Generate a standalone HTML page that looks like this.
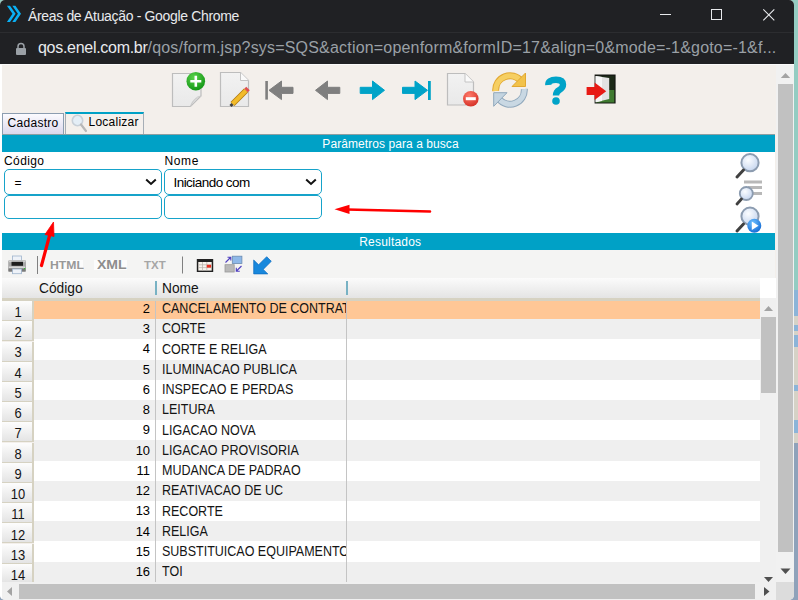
<!DOCTYPE html>
<html><head><meta charset="utf-8">
<style>
*{box-sizing:border-box;margin:0;padding:0}
html,body{width:798px;height:600px;overflow:hidden;font-family:"Liberation Sans",sans-serif;background:#8fb9b9}
.a{position:absolute}
.win{left:0;top:0;width:794px;height:600px;background:#f3efeb;border-radius:5px;overflow:hidden}
.ttl{color:#e8eaed;font-size:14px;letter-spacing:-0.34px;left:28px;top:7.5px;white-space:nowrap}
.url{left:38px;top:38.5px;font-size:16px;color:#9aa0a6;white-space:nowrap;letter-spacing:0.19px}
.url b{font-weight:normal;color:#e8eaed;letter-spacing:-0.29px}
.bar{background:#00a1c6;color:#fff;font-size:12px;text-align:center;height:18px;line-height:18px}
.lbl{font-size:12px;color:#000;white-space:nowrap}
.fld{border:1.4px solid #16a3ca;border-radius:5px;background:#fff}
.dt{font-size:14.5px;white-space:nowrap;line-height:16px;color:#141414}
.nm{transform:scaleX(0.862);transform-origin:0 0;width:213.5px;overflow:hidden}
.num{left:2px;width:32px;font-size:14.4px;line-height:16px;text-align:center;background:linear-gradient(#fdfdfd,#e4e4e4);border-bottom:1.3px solid #d6d2c2;border-right:2px solid #d6d2c2}
.cod{position:absolute;left:0;width:116px;text-align:right;top:2px}
.nom{position:absolute;left:128px;width:184px;overflow:hidden;top:2px}
.vl{position:absolute;top:0;width:1px;height:20px;background:#bdbdbd}
</style></head><body>
<div class="a" style="left:0;top:0;width:798px;height:290px;background:#94ccc2"></div>
<div class="a" style="left:0;top:290px;width:798px;height:310px;background:#8fa2ba"></div>
<div class="a" style="left:0;top:316px;width:798px;height:9px;background:#d6d2c6"></div>
<div class="a" style="left:0;top:331px;width:798px;height:4px;background:#d6d2c6"></div>
<div class="a" style="left:0;top:347px;width:798px;height:38px;background:#d6d2c6"></div>
<div class="a" style="left:0;top:391px;width:798px;height:29px;background:#d6d2c6"></div>
<div class="a" style="left:0;top:433px;width:798px;height:10px;background:#d6d2c6"></div>
<div class="a" style="left:0;top:290px;width:798px;height:26px;background:#8cb4d8"></div>
<div class="a" style="left:0;top:325px;width:798px;height:6px;background:#8cb4d8"></div>
<div class="a" style="left:0;top:335px;width:798px;height:12px;background:#8cb4d8"></div>
<div class="a" style="left:0;top:385px;width:798px;height:6px;background:#8cb4d8"></div>
<div class="a" style="left:0;top:420px;width:798px;height:13px;background:#8cb4d8"></div>
<div class="a win">
<div class="a" style="left:0;top:0;width:794px;height:32px;background:#202124"></div>
<div class="a" style="left:0;top:32px;width:794px;height:32px;background:#202124;border-top:1px solid #2c2d30"></div>
<div class="a" style="left:0;top:64px;width:794px;height:1px;background:#fafafa"></div>
<!-- chrome icon -->
<svg class="a" style="left:0;top:0" width="26" height="26" viewBox="0 0 26 26"><path d="M6.9 5.8 H10 L15.6 13.8 L10 21.9 H6.9 L12.5 13.8 Z M12.3 5.8 H15.4 L21 13.8 L15.4 21.9 H12.3 L17.9 13.8 Z" fill="#0ab0f4"/></svg>
<div class="a ttl">Áreas de Atuação - Google Chrome</div>
<!-- window controls -->
<div class="a" style="left:660px;top:14px;width:11px;height:1px;background:#e8eaed"></div>
<div class="a" style="left:711px;top:9px;width:11px;height:11px;border:1px solid #e8eaed"></div>
<svg class="a" style="left:762px;top:8px" width="14" height="14" viewBox="0 0 14 14"><path d="M1.3 1.3 L12.3 12.3 M12.3 1.3 L1.3 12.3" stroke="#e8eaed" stroke-width="1.1"/></svg>
<!-- lock -->
<svg class="a" style="left:15px;top:42px" width="12" height="14" viewBox="0 0 12 14"><path d="M3 6 V4.5 A3 3 0 0 1 9 4.5 V6" stroke="#9aa0a6" stroke-width="1.5" fill="none"/><rect x="1" y="6" width="10" height="7" rx="1" fill="#9aa0a6"/></svg>
<div class="a url"><b>qos.enel.com.br</b>/qos/form.jsp?sys=SQS&amp;action=openform&amp;formID=17&amp;align=0&amp;mode=-1&amp;goto=-1&amp;f...</div>

<!-- content left white strip -->
<div class="a" style="left:0;top:65px;width:2px;height:535px;background:#fff"></div>

<!-- tabs -->
<div class="a" style="left:2px;top:113px;width:62px;height:21px;border:1px solid #8c9db0;border-bottom:none;background:linear-gradient(#fbfbff,#dcd8ec);"></div>
<div class="a lbl" style="left:7.5px;top:115.5px;letter-spacing:0.3px">Cadastro</div>
<div class="a" style="left:65px;top:112px;width:79px;height:22px;border:1px solid #a6aeb6;border-top:2px solid #00a1c6;border-bottom:none;background:#f4f0ec"></div>
<svg class="a" style="left:70px;top:113px" width="18" height="20" viewBox="0 0 18 20"><circle cx="7.5" cy="7.5" r="5.2" fill="#e4eef6" stroke="#c8d0d8" stroke-width="1.6"/><path d="M11 11.5 L16 18" stroke="#b8b8b8" stroke-width="2.2" stroke-linecap="round"/></svg>
<div class="a lbl" style="left:88.5px;top:114.5px;letter-spacing:0.25px">Localizar</div>

<div class="a bar" style="left:2px;top:134px;width:773px;padding-left:4px;line-height:19px;border-top:1px solid #8c9ea2;letter-spacing:0.07px">Parâmetros para a busca</div>
<div class="a" style="left:2px;top:152px;width:773px;height:81px;background:#fff"></div>
<div class="a lbl" style="left:4px;top:154px;letter-spacing:0.4px">Código</div>
<div class="a lbl" style="left:164.5px;top:154px;letter-spacing:0.6px">Nome</div>
<div class="a fld" style="left:4px;top:169px;width:158px;height:26px"></div>
<div class="a fld" style="left:164px;top:169px;width:158px;height:26px"></div>
<div class="a fld" style="left:4px;top:195px;width:158px;height:24px"></div>
<div class="a fld" style="left:164px;top:195px;width:158px;height:24px"></div>
<div class="a" style="left:14.5px;top:176px;font-size:12px">=</div>
<div class="a" style="left:173.5px;top:174.5px;font-size:13.5px;letter-spacing:-0.55px">Iniciando com</div>
<svg class="a" style="left:145px;top:178px" width="12" height="8" viewBox="0 0 12 8"><path d="M1.2 1.5 L6 6 L10.8 1.5" stroke="#111" stroke-width="2" fill="none"/></svg>
<svg class="a" style="left:305px;top:178px" width="12" height="8" viewBox="0 0 12 8"><path d="M1.2 1.5 L6 6 L10.8 1.5" stroke="#111" stroke-width="2" fill="none"/></svg>

<!-- search icons -->
<svg class="a" style="left:733px;top:152px" width="32" height="82" viewBox="0 0 32 82">
<defs><radialGradient id="lens" cx="0.4" cy="0.35" r="0.7"><stop offset="0" stop-color="#fbfdff"/><stop offset="1" stop-color="#c4d4ee"/></radialGradient>
<radialGradient id="play" cx="0.4" cy="0.3" r="0.8"><stop offset="0" stop-color="#6ec0ff"/><stop offset="1" stop-color="#0a62d0"/></radialGradient></defs>
<circle cx="17" cy="10.7" r="8.6" fill="url(#lens)" stroke="#8c9cb0" stroke-width="2"/>
<path d="M4 25 L10.5 18" stroke="#404040" stroke-width="3" stroke-linecap="round"/>
<rect x="11" y="28.5" width="18" height="3" fill="#b8b8b8"/><rect x="15" y="34" width="14" height="3" fill="#b8b8b8"/><rect x="17" y="40" width="12" height="3" fill="#b8b8b8"/>
<circle cx="13.3" cy="41.5" r="6.5" fill="url(#lens)" stroke="#8c9cb0" stroke-width="1.8"/>
<path d="M4 52 L8.5 47" stroke="#404040" stroke-width="2.8" stroke-linecap="round"/>
<circle cx="17" cy="64.2" r="8.6" fill="url(#lens)" stroke="#8c9cb0" stroke-width="2"/>
<path d="M4 79 L10.5 72" stroke="#404040" stroke-width="3" stroke-linecap="round"/>
<circle cx="21.3" cy="73.7" r="7" fill="url(#play)"/>
<path d="M18.8 69.5 L25.5 73.7 L18.8 77.9 Z" fill="#fff"/>
</svg>



<div class="a bar" style="left:2px;top:233px;width:773px;height:17px;line-height:19px;padding-left:3.5px;letter-spacing:0.2px">Resultados</div>
<!-- main toolbar icons -->
<svg class="a" style="left:160px;top:66px" width="470" height="46" viewBox="160 66 470 46">
<defs>
<linearGradient id="pg" x1="0" y1="0" x2="0" y2="1"><stop offset="0" stop-color="#f2f2f2"/><stop offset="1" stop-color="#e9e9e9"/></linearGradient>
<radialGradient id="gr" cx="0.4" cy="0.3" r="0.8"><stop offset="0" stop-color="#5ad24a"/><stop offset="1" stop-color="#0b8f10"/></radialGradient>
<radialGradient id="rd" cx="0.4" cy="0.3" r="0.8"><stop offset="0" stop-color="#ff7a6a"/><stop offset="1" stop-color="#d02a20"/></radialGradient>
<linearGradient id="yl" x1="0" y1="0" x2="1" y2="1"><stop offset="0" stop-color="#f6d98a"/><stop offset="1" stop-color="#e8b030"/></linearGradient>
<linearGradient id="bl" x1="0" y1="0" x2="1" y2="1"><stop offset="0" stop-color="#d8e2ea"/><stop offset="1" stop-color="#9eb4c6"/></linearGradient>
</defs>
<!-- new -->
<path d="M172.5 73.5 H201 V96 L190.5 106.5 H172.5 Z" fill="url(#pg)" stroke="#bdbdbd" stroke-width="1.2"/>
<path d="M201 96 Q194 96.5 190.5 106.5 Q192 100 201 96 Z" fill="#fff" stroke="#c8c8c8" stroke-width="0.8"/>
<circle cx="195.8" cy="81.2" r="9.3" fill="url(#gr)"/>
<path d="M190.3 81.2 H201.3 M195.8 75.7 V86.7" stroke="#fff" stroke-width="2.6"/>
<!-- edit -->
<path d="M220.5 72.5 H240.5 L248.5 80.5 V106.5 H220.5 Z" fill="url(#pg)" stroke="#bdbdbd" stroke-width="1.2"/>
<path d="M240.5 72.5 V80.5 H248.5" fill="#fafafa" stroke="#c4c4c4" stroke-width="1"/>
<path d="M232.5 104 L246 90.5" stroke="#b07a10" stroke-width="5.6" stroke-linecap="butt"/>
<path d="M232.5 104 L246 90.5" stroke="#f2bb2a" stroke-width="4" stroke-linecap="butt"/>
<path d="M246 90.5 L248 88.5" stroke="#e05050" stroke-width="5" />
<path d="M232.5 104 L230.5 106" stroke="#404040" stroke-width="3"/>
<!-- first -->
<rect x="265.3" y="81" width="2.6" height="18.6" fill="#7f7f7f"/>
<path d="M269 90.3 L281.5 81 V87.3 H293 V93.4 H281.5 V99.6 Z" fill="#7f7f7f" stroke="#7f7f7f" stroke-width="1" stroke-linejoin="round"/>
<!-- prev -->
<path d="M315.5 90.3 L327.5 81 V87.3 H339.8 V93.4 H327.5 V99.6 Z" fill="#7f7f7f" stroke="#7f7f7f" stroke-width="1" stroke-linejoin="round"/>
<!-- next -->
<path d="M384.5 90.3 L372.5 81 V87.3 H360.2 V93.4 H372.5 V99.6 Z" fill="#00a3c8" stroke="#00a3c8" stroke-width="1" stroke-linejoin="round"/>
<!-- last -->
<path d="M427.5 90.3 L415 81 V87.3 H402.5 V93.4 H415 V99.6 Z" fill="#00a3c8" stroke="#00a3c8" stroke-width="1" stroke-linejoin="round"/>
<rect x="428" y="81" width="2.8" height="19" fill="#00a3c8"/>
<!-- delete -->
<path d="M447.5 73.5 H465 L473.5 82 V105 H447.5 Z" fill="url(#pg)" stroke="#bdbdbd" stroke-width="1.2"/>
<path d="M465 73.5 V82 H473.5" fill="#fafafa" stroke="#c4c4c4" stroke-width="1"/>
<circle cx="470.8" cy="98.7" r="7.8" fill="url(#rd)"/>
<rect x="465.8" y="97.2" width="10" height="3" fill="#fff"/>
<!-- refresh -->
<path d="M495.7 91 A14.3 14.3 0 0 1 521 81" stroke="#e2a832" stroke-width="7" fill="none"/>
<path d="M495.7 91 A14.3 14.3 0 0 1 521 81" stroke="#f6cf62" stroke-width="5" fill="none"/>
<path d="M525.5 73 V86.5 H512 Z" fill="#f2c24a" stroke="#e2a832" stroke-width="1" stroke-linejoin="round"/>
<path d="M524.3 89 A14.3 14.3 0 0 1 499 99" stroke="#90a8bc" stroke-width="7" fill="none"/>
<path d="M524.3 89 A14.3 14.3 0 0 1 499 99" stroke="#c9d8e3" stroke-width="5" fill="none"/>
<path d="M493.7 106.3 V92.7 H507 Z" fill="#c4d4e0" stroke="#90a8bc" stroke-width="1" stroke-linejoin="round"/>
<!-- help -->
<path d="M548.3 85 Q548 79.7 556 79.7 Q563 79.7 563 84.5 Q563 88 559.5 89.8 Q556 91.6 556 95.6" stroke="#00a3c8" stroke-width="6.4" fill="none" stroke-linecap="butt"/>
<circle cx="556" cy="101" r="3.8" fill="#00a3c8"/>
<!-- exit -->
<rect x="594.6" y="74.5" width="21" height="29" fill="#161a14"/>
<rect x="596" y="90" width="18.3" height="12.5" fill="#3f7a30"/>
<rect x="596" y="76" width="18.3" height="14" fill="#1c2a18"/>
<path d="M595.6 76 L609.2 78 V99 L595.6 102.3 Z" fill="#e2e2e2"/>
<path d="M595.6 76 L602 77 V101 L595.6 102.3 Z" fill="#f6f6f6"/>
<path d="M586.6 87 H594.6 V82.5 L606.2 91.2 L594.6 100 V95 H586.6 Z" fill="#e81a14"/>
</svg>

<!-- grid toolbar -->
<div class="a" style="left:2px;top:250px;width:773px;height:28px;background:#f4f4f3"></div>
<svg class="a" style="left:0;top:250px" width="290" height="28" viewBox="0 250 290 28">
<rect x="12.5" y="256" width="9" height="5" fill="#eef2f8" stroke="#9fb4cc" stroke-width="0.8"/>
<rect x="8.2" y="260.2" width="17.8" height="11.5" rx="1" fill="#a8a8a8"/>
<rect x="8.8" y="260.6" width="16.6" height="1.6" fill="#d0d0d0"/>
<rect x="11.5" y="261.8" width="11.5" height="4" fill="#1e1e1e"/>
<rect x="9" y="266.5" width="16" height="1.6" fill="#d8d8d8"/>
<rect x="8.5" y="268.5" width="17" height="3" fill="#7a7a7a"/>
<rect x="24" y="268" width="1.2" height="1.2" fill="#30c030"/>
<rect x="12.5" y="269" width="9" height="4.7" fill="#eef2f8" stroke="#9fb4cc" stroke-width="0.8"/>
<rect x="37" y="256" width="1" height="18" fill="#808080"/>
<rect x="50" y="260" width="33" height="10" fill="#fcfcfc"/>
<rect x="94" y="260" width="33" height="10" fill="#fcfcfc"/>
<rect x="182" y="256.5" width="1" height="17" fill="#808080"/>
<!-- table -->
<rect x="196.8" y="259" width="16.4" height="13" fill="#222"/>
<rect x="198.3" y="262" width="13.4" height="8.6" fill="#f8f4ee"/>
<path d="M198.3 264.8 H211.7 M198.3 267.6 H211.7 M202.5 262 V270.6 M206.8 262 V270.6" stroke="#b8b0a8" stroke-width="0.7"/>
<rect x="206.8" y="264.8" width="4.3" height="2.8" fill="#e83020"/>
<!-- swap -->
<rect x="232.3" y="256.2" width="9.6" height="7.3" fill="#8eb8e8" stroke="#6a8ab0" stroke-width="0.8"/>
<rect x="225" y="264.7" width="9.2" height="7.3" fill="#b8b8b8" stroke="#9a9a9a" stroke-width="0.8"/>
<path d="M225.5 262.5 L230.5 257.5 M227.5 257.3 H230.8 V260.6" stroke="#5040c0" stroke-width="1.1" fill="none"/>
<path d="M241.5 266 L236.5 271 M236.3 267.8 V271.2 H239.8" stroke="#5040c0" stroke-width="1.1" fill="none"/>
<!-- blue arrow -->
<path d="M253.7 273.9 V260 L258.6 264.8 L266.7 256.7 L271.3 261.3 L263.2 269.4 L267.8 273.9 Z" fill="#1888dc" stroke="#0d6cc0" stroke-width="0.7" stroke-linejoin="round"/>
</svg>
<div class="a" style="left:49.5px;top:258.5px;font-size:11.5px;font-weight:bold;color:#999;transform:scaleX(1.06);transform-origin:0 0">HTML</div>
<div class="a" style="left:96.5px;top:258px;font-size:12px;font-weight:bold;color:#8e8e8e;transform:scaleX(1.17);transform-origin:0 0">XML</div>
<div class="a" style="left:144px;top:258.5px;font-size:11.5px;font-weight:bold;color:#a6a6a6;letter-spacing:0px">TXT</div>

<!-- grid header -->
<div class="a" style="left:2px;top:278px;width:758px;height:20px;background:linear-gradient(#fbfbfb,#e4e4e4)"></div>
<div class="a" style="left:2px;top:298px;width:758px;height:2.7px;background:#d6d2c2"></div>
<div class="a" style="left:760px;top:278px;width:16px;height:20px;background:#fff"></div>
<div class="a" style="left:39px;top:279.8px;font-size:14.2px;white-space:nowrap;color:#141414;transform:scaleX(0.97);transform-origin:0 0">Código</div>
<div class="a" style="left:155px;top:281px;width:2.2px;height:13.5px;background:#78b2c4"></div>
<div class="a" style="left:162px;top:279.8px;font-size:14.2px;white-space:nowrap;color:#141414;transform:scaleX(0.97);transform-origin:0 0">Nome</div>
<div class="a" style="left:346px;top:281px;width:2.2px;height:13.5px;background:#78b2c4"></div>
<div class="a" style="left:34px;top:300.70px;width:726px;height:17.90px;background:#ffc796"></div>
<div class="a dtNone" style="left:34px;top:300.00px;width:116px;text-align:right;font-size:13.6px;margin-top:0.8px;transform:scaleX(0.95);transform-origin:100% 0">2</div>
<div class="a dt nm" style="left:162px;top:300.00px">CANCELAMENTO DE CONTRATO</div>
<div class="a" style="left:34px;top:319.20px;width:726px;height:20.20px;background:#efefef"></div>
<div class="a dtNone" style="left:34px;top:320.25px;width:116px;text-align:right;font-size:13.6px;margin-top:0.8px;transform:scaleX(0.95);transform-origin:100% 0">3</div>
<div class="a dt nm" style="left:162px;top:320.25px">CORTE</div>
<div class="a" style="left:34px;top:339.40px;width:726px;height:20.20px;background:#ffffff"></div>
<div class="a dtNone" style="left:34px;top:340.50px;width:116px;text-align:right;font-size:13.6px;margin-top:0.8px;transform:scaleX(0.95);transform-origin:100% 0">4</div>
<div class="a dt nm" style="left:162px;top:340.50px">CORTE E RELIGA</div>
<div class="a" style="left:34px;top:359.60px;width:726px;height:20.20px;background:#efefef"></div>
<div class="a dtNone" style="left:34px;top:360.75px;width:116px;text-align:right;font-size:13.6px;margin-top:0.8px;transform:scaleX(0.95);transform-origin:100% 0">5</div>
<div class="a dt nm" style="left:162px;top:360.75px">ILUMINACAO PUBLICA</div>
<div class="a" style="left:34px;top:379.80px;width:726px;height:20.20px;background:#ffffff"></div>
<div class="a dtNone" style="left:34px;top:381.00px;width:116px;text-align:right;font-size:13.6px;margin-top:0.8px;transform:scaleX(0.95);transform-origin:100% 0">6</div>
<div class="a dt nm" style="left:162px;top:381.00px">INSPECAO E PERDAS</div>
<div class="a" style="left:34px;top:400.00px;width:726px;height:20.20px;background:#efefef"></div>
<div class="a dtNone" style="left:34px;top:401.25px;width:116px;text-align:right;font-size:13.6px;margin-top:0.8px;transform:scaleX(0.95);transform-origin:100% 0">8</div>
<div class="a dt nm" style="left:162px;top:401.25px">LEITURA</div>
<div class="a" style="left:34px;top:420.20px;width:726px;height:20.20px;background:#ffffff"></div>
<div class="a dtNone" style="left:34px;top:421.50px;width:116px;text-align:right;font-size:13.6px;margin-top:0.8px;transform:scaleX(0.95);transform-origin:100% 0">9</div>
<div class="a dt nm" style="left:162px;top:421.50px">LIGACAO NOVA</div>
<div class="a" style="left:34px;top:440.40px;width:726px;height:20.20px;background:#efefef"></div>
<div class="a dtNone" style="left:34px;top:441.75px;width:116px;text-align:right;font-size:13.6px;margin-top:0.8px;transform:scaleX(0.95);transform-origin:100% 0">10</div>
<div class="a dt nm" style="left:162px;top:441.75px">LIGACAO PROVISORIA</div>
<div class="a" style="left:34px;top:460.60px;width:726px;height:20.20px;background:#ffffff"></div>
<div class="a dtNone" style="left:34px;top:462.00px;width:116px;text-align:right;font-size:13.6px;margin-top:0.8px;transform:scaleX(0.95);transform-origin:100% 0">11</div>
<div class="a dt nm" style="left:162px;top:462.00px">MUDANCA DE PADRAO</div>
<div class="a" style="left:34px;top:480.80px;width:726px;height:20.20px;background:#efefef"></div>
<div class="a dtNone" style="left:34px;top:482.25px;width:116px;text-align:right;font-size:13.6px;margin-top:0.8px;transform:scaleX(0.95);transform-origin:100% 0">12</div>
<div class="a dt nm" style="left:162px;top:482.25px">REATIVACAO DE UC</div>
<div class="a" style="left:34px;top:501.00px;width:726px;height:20.20px;background:#ffffff"></div>
<div class="a dtNone" style="left:34px;top:502.50px;width:116px;text-align:right;font-size:13.6px;margin-top:0.8px;transform:scaleX(0.95);transform-origin:100% 0">13</div>
<div class="a dt nm" style="left:162px;top:502.50px">RECORTE</div>
<div class="a" style="left:34px;top:521.20px;width:726px;height:20.20px;background:#efefef"></div>
<div class="a dtNone" style="left:34px;top:522.75px;width:116px;text-align:right;font-size:13.6px;margin-top:0.8px;transform:scaleX(0.95);transform-origin:100% 0">14</div>
<div class="a dt nm" style="left:162px;top:522.75px">RELIGA</div>
<div class="a" style="left:34px;top:541.40px;width:726px;height:20.20px;background:#ffffff"></div>
<div class="a dtNone" style="left:34px;top:543.00px;width:116px;text-align:right;font-size:13.6px;margin-top:0.8px;transform:scaleX(0.95);transform-origin:100% 0">15</div>
<div class="a dt nm" style="left:162px;top:543.00px">SUBSTITUICAO EQUIPAMENTO</div>
<div class="a" style="left:34px;top:561.60px;width:726px;height:20.00px;background:#efefef"></div>
<div class="a dtNone" style="left:34px;top:563.25px;width:116px;text-align:right;font-size:13.6px;margin-top:0.8px;transform:scaleX(0.95);transform-origin:100% 0">16</div>
<div class="a dt nm" style="left:162px;top:563.25px">TOI</div>
<div class="a num" style="top:300.70px;height:20.60px;border-bottom-width:1.3px"><span style="position:absolute;left:0.5px;width:30px;color:#141414;transform:scaleX(0.9);top:3.10px">1</span></div>
<div class="a num" style="top:321.30px;height:20.20px;border-bottom-width:1.3px"><span style="position:absolute;left:0.5px;width:30px;color:#141414;transform:scaleX(0.9);top:2.75px">2</span></div>
<div class="a num" style="top:341.50px;height:20.20px;border-bottom-width:1.3px"><span style="position:absolute;left:0.5px;width:30px;color:#141414;transform:scaleX(0.9);top:2.80px">3</span></div>
<div class="a num" style="top:361.70px;height:20.20px;border-bottom-width:1.3px"><span style="position:absolute;left:0.5px;width:30px;color:#141414;transform:scaleX(0.9);top:2.85px">4</span></div>
<div class="a num" style="top:381.90px;height:20.20px;border-bottom-width:1.3px"><span style="position:absolute;left:0.5px;width:30px;color:#141414;transform:scaleX(0.9);top:2.90px">5</span></div>
<div class="a num" style="top:402.10px;height:20.20px;border-bottom-width:1.3px"><span style="position:absolute;left:0.5px;width:30px;color:#141414;transform:scaleX(0.9);top:2.95px">6</span></div>
<div class="a num" style="top:422.30px;height:20.20px;border-bottom-width:1.3px"><span style="position:absolute;left:0.5px;width:30px;color:#141414;transform:scaleX(0.9);top:3.00px">7</span></div>
<div class="a num" style="top:442.50px;height:20.20px;border-bottom-width:1.3px"><span style="position:absolute;left:0.5px;width:30px;color:#141414;transform:scaleX(0.9);top:3.05px">8</span></div>
<div class="a num" style="top:462.70px;height:20.20px;border-bottom-width:1.3px"><span style="position:absolute;left:0.5px;width:30px;color:#141414;transform:scaleX(0.9);top:3.10px">9</span></div>
<div class="a num" style="top:482.90px;height:20.20px;border-bottom-width:1.3px"><span style="position:absolute;left:0.5px;width:30px;color:#141414;transform:scaleX(0.9);top:3.15px">10</span></div>
<div class="a num" style="top:503.10px;height:20.20px;border-bottom-width:1.3px"><span style="position:absolute;left:0.5px;width:30px;color:#141414;transform:scaleX(0.9);top:3.20px">11</span></div>
<div class="a num" style="top:523.30px;height:20.20px;border-bottom-width:1.3px"><span style="position:absolute;left:0.5px;width:30px;color:#141414;transform:scaleX(0.9);top:3.25px">12</span></div>
<div class="a num" style="top:543.50px;height:20.20px;border-bottom-width:1.3px"><span style="position:absolute;left:0.5px;width:30px;color:#141414;transform:scaleX(0.9);top:3.30px">13</span></div>
<div class="a num" style="top:563.70px;height:18.10px;border-bottom-width:0px"><span style="position:absolute;left:0.5px;width:30px;color:#141414;transform:scaleX(0.9);top:3.35px">14</span></div>
<div class="a" style="left:155px;top:300.7px;width:1px;height:281px;background:#c4c4c4"></div>
<div class="a" style="left:346px;top:300.7px;width:1px;height:281px;background:#c4c4c4"></div>
<!-- inner v scrollbar -->
<div class="a" style="left:760px;top:298px;width:16px;height:284px;background:#f0f0f0"></div>
<svg class="a" style="left:760px;top:298px" width="16" height="284" viewBox="0 0 16 284"><path d="M4 13 L8.5 8 L13 13 Z" fill="#a3a3a3"/><path d="M4 279 L8.5 284 L13 279 Z" fill="#505050"/></svg>
<div class="a" style="left:761px;top:317px;width:15px;height:76px;background:#c1c1c1"></div>
<!-- h scrollbar -->
<div class="a" style="left:2px;top:582px;width:774px;height:18px;background:#f0f0f0"></div>
<svg class="a" style="left:0;top:582px" width="776" height="18" viewBox="0 0 776 18"><path d="M12 5 L7 9.5 L12 14 Z" fill="#a3a3a3"/><path d="M764 5 L769.5 9.5 L764 14 Z" fill="#505050"/></svg>
<div class="a" style="left:19px;top:584px;width:736px;height:14.7px;background:#c1c1c1"></div>
<!-- outer v scrollbar -->
<div class="a" style="left:776px;top:65px;width:18px;height:517px;background:#f1f1f1"></div>
<svg class="a" style="left:776px;top:65px" width="18" height="517" viewBox="0 0 18 517"><path d="M4.8 12.9 L9.5 7.9 L14.2 12.9 Z" fill="#a3a3a3"/><path d="M4.5 503.6 L9.5 509 L14.5 503.6 Z" fill="#505050"/></svg>
<div class="a" style="left:778px;top:84px;width:15px;height:468px;background:#c1c1c1"></div>
<div class="a" style="left:776px;top:582px;width:18px;height:18px;background:#dcdcdc"></div>
<!-- red arrows -->
<svg class="a" style="left:0;top:0" width="798" height="600" viewBox="0 0 798 600">
<path d="M41.5 265.5 L50.5 232" stroke="#ff0000" stroke-width="3.2" stroke-linecap="round"/>
<path d="M53.5 222 L45 234.5 L54 236.5 Z" fill="#ff0000" stroke="#ff0000" stroke-width="0.8" stroke-linejoin="round"/>
<path d="M430 211.5 L347 209.5" stroke="#ff0000" stroke-width="2.6" stroke-linecap="round"/>
<path d="M334.5 209.2 L349.5 204.8 L349.5 214 Z" fill="#ff0000"/>
</svg>
</div>
</body></html>
